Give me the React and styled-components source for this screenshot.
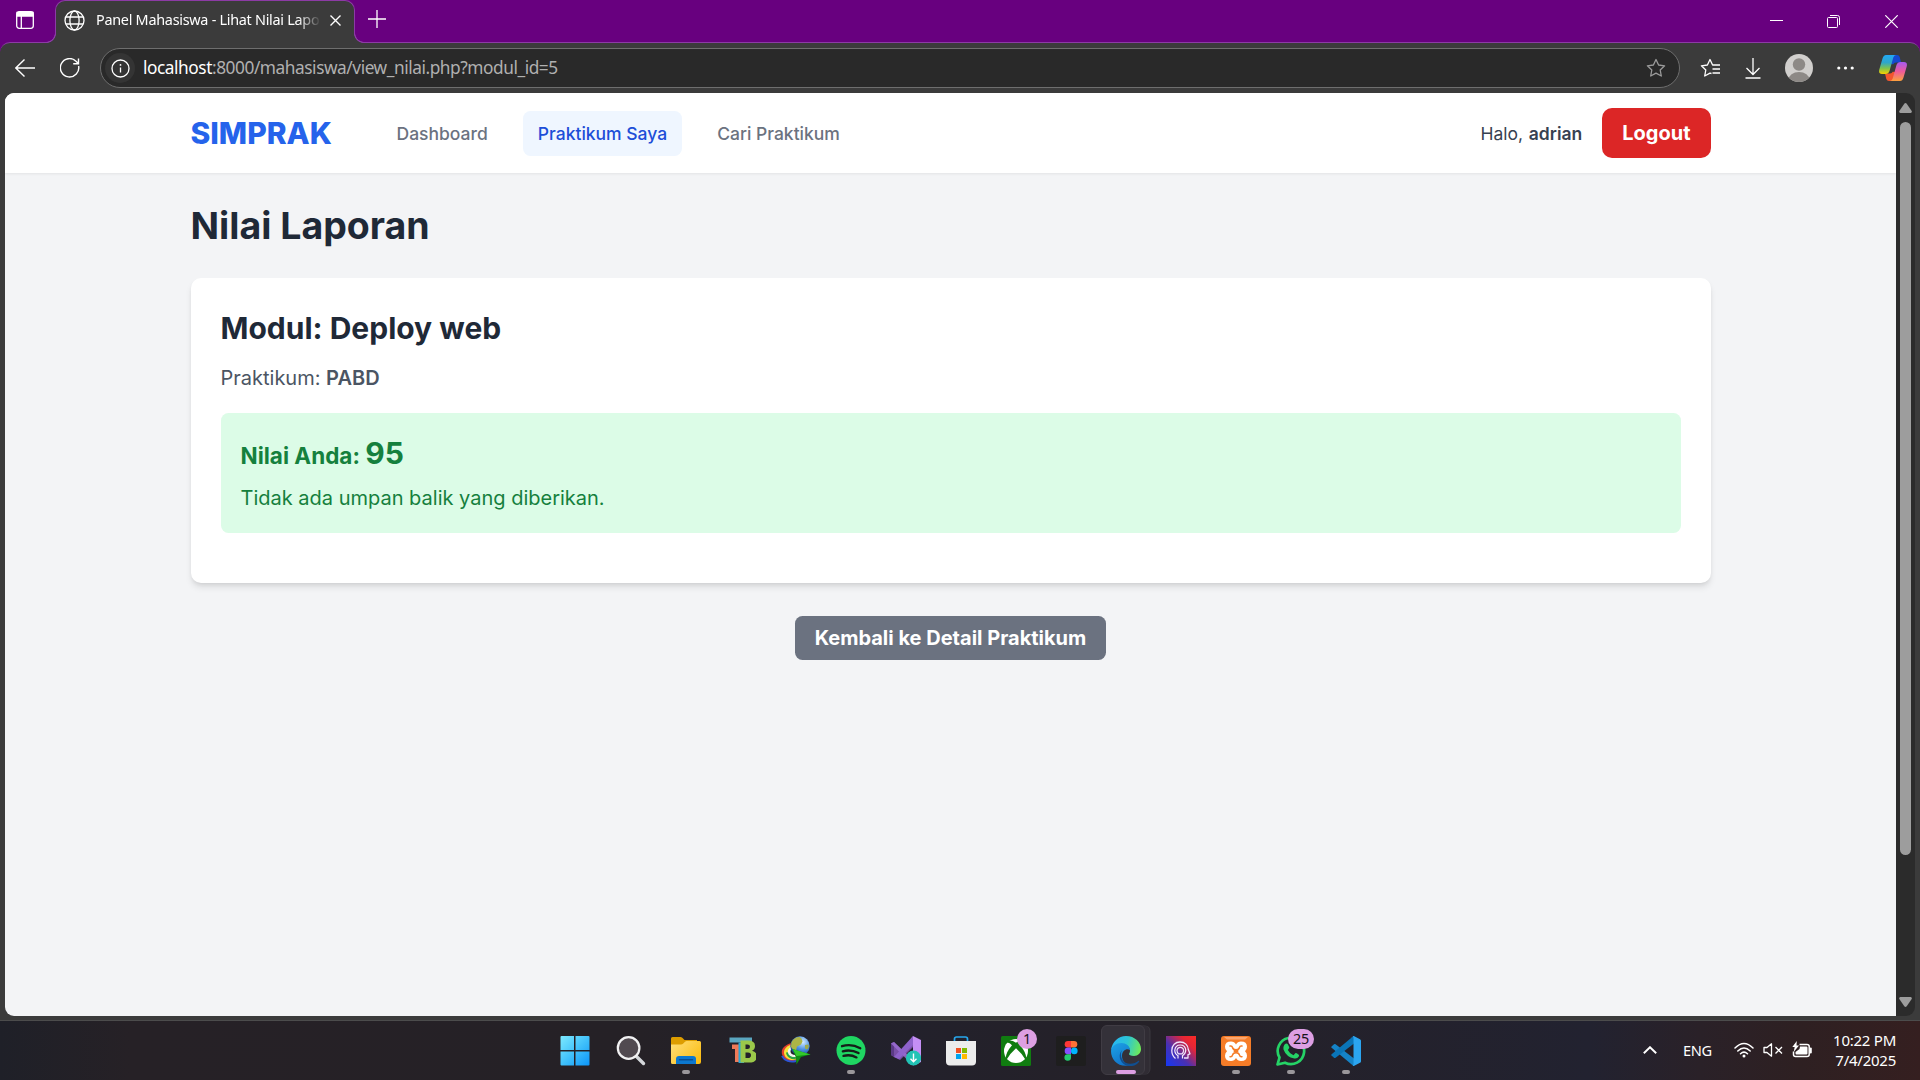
import React from "react";
import styled, { createGlobalStyle } from "styled-components";

const UI = '"Noto Sans", "Open Sans", sans-serif';
const FRAME = "#3b3b3b";
const LINE = "#8c3ba5";

const GlobalStyle = createGlobalStyle`
  * { box-sizing: border-box; }
  body { margin: 0; background: #212026; overflow: hidden; }
  svg { display: block; flex: none; }
  h1, h2, p { margin: 0; }
`;

const Screen = styled.div`
  width: 1920px;
  height: 1080px;
  display: flex;
  flex-direction: column;
  overflow: hidden;
  font-family: ${UI};
`;

/* ---------- Browser chrome ---------- */
const Browser = styled.div`
  height: 1021px;
  display: flex;
  flex-direction: column;
  background: #68007f;
`;
const TitleBar = styled.div`
  height: 42px;
  display: flex;
  flex: none;
  padding-left: 16px;
  color: #fff;
`;
const WorkspaceButton = styled.div`
  width: 39px;
  padding-top: 11px;
`;
const Tab = styled.div`
  position: relative;
  width: 300px;
  height: 43px;
  flex: none;
  display: flex;
  align-items: center;
  padding: 0 13px 3px 8px;
  background: ${FRAME};
  border: 1px solid ${LINE};
  border-bottom: 0;
  border-radius: 10px 10px 0 0;
  z-index: 1;
  &::before,
  &::after {
    content: "";
    position: absolute;
    bottom: 0;
    width: 10px;
    height: 10px;
  }
  &::before {
    left: -10px;
    background: radial-gradient(circle at 0 0, transparent 8.5px, ${LINE} 9px, ${LINE} 9.7px, ${FRAME} 10.3px);
  }
  &::after {
    right: -10px;
    background: radial-gradient(circle at 100% 0, transparent 8.5px, ${LINE} 9px, ${LINE} 9.7px, ${FRAME} 10.3px);
  }
`;
const TabTitle = styled.div`
  width: 226px;
  margin-left: 11px;
  margin-right: 8px;
  white-space: nowrap;
  font-size: 14.4px;
  letter-spacing: -0.27px;
  line-height: 22px;
  padding-bottom: 1px;
  mask-image: linear-gradient(90deg, #000 202px, transparent 225px);
`;
const NewTab = styled.div`
  padding: 10px 0 0 13px;
  flex: 1;
`;
const WindowControls = styled.div`
  display: flex;
  height: 43px;
`;
const WindowButton = styled.div`
  width: 57.6px;
  display: flex;
  align-items: center;
  justify-content: center;
`;
const Toolbar = styled.div`
  height: 51px;
  flex: none;
  display: flex;
  align-items: center;
  padding-left: 15px;
  background: ${FRAME};
  border-top: 1px solid ${LINE};
  border-radius: 10px 10px 0 0;
`;
const Back = styled.div`
  width: 45px;
`;
const Refresh = styled.div`
  width: 40px;
`;
const AddressBar = styled.div`
  width: 1580px;
  height: 40px;
  display: flex;
  align-items: center;
  padding: 0 13px 0 4px;
  background: #292929;
  border: 1px solid #6e6e6e;
  border-radius: 20px;
`;
const InfoBadge = styled.div`
  width: 30px;
  height: 30px;
  border-radius: 15px;
  background: #343434;
  display: flex;
  align-items: center;
  justify-content: center;
`;
const Url = styled.div`
  flex: 1;
  margin-left: 8px;
  font-size: 17.3px;
  letter-spacing: -0.45px;
  line-height: 24px;
  color: #b0b0b0;
  white-space: nowrap;
`;
const Host = styled.span`
  color: #fff;
`;
const ToolbarActions = styled.div`
  flex: 1;
  display: flex;
  align-items: center;
  justify-content: space-between;
  padding: 0 13px 0 20px;
`;
const Viewport = styled.div`
  flex: 1;
  min-height: 0;
  display: flex;
  padding: 0 5px 4px;
  background: ${FRAME};
  border-bottom: 1px solid #4c4c4c;
`;
const Scrollbar = styled.div`
  width: 19px;
  display: flex;
  flex-direction: column;
  align-items: center;
  padding: 10px 0 9px;
  background: #2b2b2b;
  border-radius: 0 9px 9px 0;
`;
const Thumb = styled.div`
  width: 11px;
  height: 733px;
  margin-top: 9px;
  margin-bottom: auto;
  border-radius: 6px;
  background: #9d9d9d;
`;

/* ---------- Web page ---------- */
const Page = styled.div`
  flex: 1;
  overflow: hidden;
  background: #f3f4f6;
  border-radius: 9px 0 0 9px;
  font-family: Inter, sans-serif;
  font-size: 20px;
  line-height: 30px;
`;
const Header = styled.header`
  height: 80px;
  background: #fff;
  box-shadow: 0 1.25px 2.5px rgba(0, 0, 0, 0.07);
`;
const Container = styled.div`
  width: 1520px;
  margin: 0 auto;
`;
const Nav = styled(Container)`
  height: 80px;
  display: flex;
  align-items: center;
`;
const Brand = styled.div`
  width: 141px;
  font-size: 30px;
  line-height: 40px;
  font-weight: 800;
  color: #2563eb;
  margin-right: 50px;
`;
const Links = styled.nav`
  display: flex;
  gap: 20px;
  flex: 1;
`;
const NavLink = styled.a`
  padding: 10px 15px;
  border-radius: 7.5px;
  font-size: 17.5px;
  line-height: 25px;
  font-weight: 500;
  color: ${(p) => (p.$active ? "#1d4ed8" : "#6b7280")};
  background: ${(p) => (p.$active ? "#eff6ff" : "transparent")};
`;
const Greeting = styled.div`
  font-size: 17.5px;
  line-height: 25px;
  color: #374151;
  margin-right: 20px;
  word-spacing: 0.8px;
  b { font-weight: 600; }
`;
const Logout = styled.a`
  padding: 10px 20px;
  border-radius: 10px;
  background: #dc2626;
  color: #fff;
  font-weight: 700;
`;
const Main = styled(Container)`
  padding-top: 30px;
`;
const PageTitle = styled.h1`
  font-size: 37.5px;
  line-height: 45px;
  font-weight: 700;
  color: #1f2937;
  margin-bottom: 30px;
`;
const Card = styled.section`
  padding: 30px 30px 50px;
  background: #fff;
  border-radius: 10px;
  box-shadow: 0 5px 7.5px -1.25px rgba(0, 0, 0, 0.1), 0 2.5px 5px -2.5px rgba(0, 0, 0, 0.1);
`;
const ModuleTitle = styled.h2`
  font-size: 30px;
  line-height: 40px;
  font-weight: 700;
  color: #1f2937;
  margin-bottom: 15px;
`;
const Course = styled.p`
  color: #4b5563;
  margin-bottom: 20px;
  b { font-weight: 600; }
`;
const Grade = styled.div`
  padding: 20px;
  background: #dcfce7;
  border-radius: 7.5px;
  color: #15803d;
`;
const Score = styled.p`
  font-size: 22.5px;
  line-height: 40px;
  height: 40px;
  font-weight: 700;
  margin-bottom: 10px;
  span { font-size: 30px; }
`;
const Actions = styled.div`
  display: flex;
  justify-content: center;
  margin-top: 33px;
`;
const BackLink = styled.a`
  padding: 7px 20px;
  border-radius: 7.5px;
  background: #6b7280;
  color: #fff;
  font-weight: 700;
`;

/* ---------- Taskbar ---------- */
const Taskbar = styled.div`
  height: 59px;
  display: flex;
  padding-left: 548.5px;
  background: linear-gradient(90deg, #1f2028 0, #262126 130px, #252126 640px, #22212c 850px, #252128 1150px, #222230 1590px, #2a2128 1700px, #2e2022 1800px, #351f20 1920px);
`;
const Apps = styled.div`
  display: flex;
  width: 825px;
`;
const AppButton = styled.div`
  position: relative;
  width: 55px;
  display: flex;
  flex-direction: column;
  align-items: center;
  padding: 15px ${(p) => p.$inset || 0}px 0 0;
`;
const ActiveTile = styled.div`
  position: absolute;
  left: 2.5px;
  top: 4px;
  width: 44px;
  height: 50px;
  border-radius: 6px;
  background: #343139;
  border: 1px solid #403c44;
  box-shadow: 5px 0 0 -0.5px #302c34, 6px 0 0 -0.5px #3b383f;
`;
const AppIcon = styled.svg.attrs({ width: 30, height: 30, viewBox: "0 0 30 30", fill: "none" })`
  position: relative;
`;
const Indicator = styled.div`
  position: relative;
  width: ${(p) => (p.$active ? 20 : 8)}px;
  height: 4px;
  margin-top: 4px;
  border-radius: 2px;
  background: ${(p) => (p.$active ? "#dd9fe3" : "#9a979b")};
`;
const Badge = styled.div`
  position: absolute;
  top: 8px;
  left: ${(p) => p.$left}px;
  min-width: 20px;
  height: 20px;
  padding: 0 5px;
  border-radius: 10px;
  background: #dd9fe3;
  color: #17131a;
  font-size: 14.4px;
  line-height: 20px;
  letter-spacing: -0.3px;
  text-align: center;
`;
const Tray = styled.div`
  flex: 1;
  display: flex;
  align-items: center;
  justify-content: flex-end;
  padding: 0 24px 2px 0;
  color: #fff;
`;
const Language = styled.div`
  width: 29px;
  margin: 0 22px 0 26px;
  font-size: 14.6px;
  letter-spacing: -0.4px;
  line-height: 20px;
  padding-top: 1px;
  white-space: nowrap;
`;
const StatusIcons = styled.div`
  display: flex;
  align-items: center;
  gap: 9px;
  margin-right: 20px;
`;
const Clock = styled.div`
  width: 63px;
  font-size: 15px;
  line-height: 20px;
  letter-spacing: -0.25px;
  display: flex;
  flex-direction: column;
  align-items: flex-end;
  white-space: nowrap;
`;

const star = "M10 1.5 12.6 7l6 .8-4.4 4.2 1.1 6L10 15.100l-5.300 2.900 1.100-6L1.400 7.800l6-.8z";

const apps = [
  { id: "start", inset: 2, art: (
    <>
      <defs><linearGradient id="win" x1="0" y1="0" x2="30" y2="30" gradientUnits="userSpaceOnUse"><stop stopColor="#7eeaff" /><stop offset=".5" stopColor="#42c2fb" /><stop offset="1" stopColor="#0a93f8" /></linearGradient></defs>
      <path fill="url(#win)" d="M1.500 0H14v14H.5V1q0-1 1-1zM15.500 0H28.500q1 0 1 1v13h-14zM.5 15.500H14v14H1.500q-1 0-1-1zM15.500 15.500h14v13q0 1-1 1h-13z" />
    </>
  ) },
  { id: "search", art: (
    <>
      <path d="m20.500 20.500 7 7" stroke="#d4d7da" strokeWidth="3.400" strokeLinecap="round" />
      <circle cx="12.600" cy="12" r="10.800" fill="#514a50" stroke="#f1f1f2" strokeWidth="2.200" />
    </>
  ) },
  { id: "explorer", running: true, art: (
    <>
      <defs><linearGradient id="fold" x1="0" y1="4" x2="26" y2="28" gradientUnits="userSpaceOnUse"><stop stopColor="#ffe07d" /><stop offset="1" stopColor="#fbbd12" /></linearGradient></defs>
      <path d="M0 2.500Q0 1 1.500 1h8q1 0 1.800.8L13.500 4H26v6H0z" fill="#dd9d00" />
      <path d="M0 8.500h10q1.200 0 2-.8l2-2q.8-.7 1.800-.7H28.500Q30 5 30 6.500v19.500q0 2-2 2H1.500Q0 28 0 26.500z" fill="url(#fold)" />
      <path d="M5 28v-5q0-3 3-3h14q3 0 3 3v5z" fill="#0c78cf" />
      <path d="M8.500 23.800h13" stroke="#0a4f93" strokeWidth="1.500" strokeLinecap="round" />
    </>
  ) },
  { id: "tb", art: (
    <>
      <path d="M3.500 1.500H26v5H3.500z" fill="#5aa6c0" />
      <path d="M6 8.500h7.500V26H9V13H6z" fill="#ee7a58" />
      <path d="M12.500 6.500h5.500v20.500h-5.500z" fill="#2ba6d2" />
      <path fillRule="evenodd" d="M14.500 4.500h7.500q7 0 7 5.500 0 3.500-3 4.800 4.800 1.200 4.800 5.500 0 6.200-7.800 6.200h-8.500zm5 4v4.500h2q2.500 0 2.500-2.300 0-2.200-2.500-2.200zm0 8v5.500h2.500q3 0 3-2.800 0-2.700-3-2.700z" fill="#9bc84a" />
    </>
  ) },
  { id: "idm", art: (
    <>
      <defs><radialGradient id="glb" cx=".65" cy=".3" r=".75"><stop stopColor="#d5ecff" /><stop offset=".5" stopColor="#4d92e4" /><stop offset="1" stopColor="#143f8d" /></radialGradient></defs>
      <path d="M14 6.500C5 7.500-1.500 12.500 1.500 19.500 4 25 10 26.500 16 24.500l-1-5C11 20 9 18.500 8.500 16c-.5-2.500 2-4 5-4.500z" fill="#e5402d" />
      <path d="M13.500 7.800C6 9 1.500 13.500 3.500 19c1.500 4 6 5.500 11 4.800l-.5-4C10.500 20 8.700 18 8.500 16c-.3-2.500 2-4 4.500-4.500z" fill="#f6e33a" />
      <path d="M5 16.500c.5 4 4 7 9.500 7l.5-2.500c-4 .5-6.500-2-6.500-5z" fill="#27a346" />
      <path d="M13 10C9 10.500 6 13.500 7 17c.8 3 4 4.500 8 4l-.5-2c-3 0-5-1.500-5-3.500 0-2.500 1.500-3.500 4-4z" fill="#f1f3ee" />
      <path d="M1 20c2.500 4.500 8 6.500 14 5" stroke="#2a55d8" strokeWidth="2" />
      <circle cx="19" cy="10" r="9.700" fill="url(#glb)" />
      <path d="M10.500 6q3-5 8-5l2 1.500 1 3-1.500 3-4 2-1 4q-4-1-5-4z" fill="#aeb546" />
      <path d="m24 9 3.500-.5q1 3-1.500 5l-2-1z" fill="#9eab4b" />
      <path d="m11.500 13 18 5.500-9.500 2.500-4.500 7.500-.5-7z" fill="#0f8f13" />
      <path d="m11.500 13 18 5.500-14 1.500z" fill="#33c82c" />
    </>
  ) },
  { id: "spotify", running: true, art: (
    <>
      <circle cx="15" cy="14.500" r="14.500" fill="#1fd662" />
      <path d="M6 10.200q9.500-2.800 18.300 2M6.800 15.300q8.200-2.200 15.700 1.800M7.500 19.900q7-1.800 13 1.500" stroke="#151d19" strokeWidth="2.300" strokeLinecap="round" />
    </>
  ) },
  { id: "vs", art: (
    <>
      <path d="m0 7.500 3-1.500 8.500 8.500L22 0v11L9 24l-6-3-3-2z" fill="#7950a8" />
      <path d="M0 7.500 3 6v15l-3-2z" fill="#5b3a86" />
      <path d="m3 6 19 18v5.500L0 7.500z" fill="#9b6dd4" opacity=".85" />
      <path d="M22 0 30 4v22l-8 3.500z" fill="#c58ff5" />
      <path d="m3 21 19-21v9L8 23z" fill="#8e62cb" />
      <circle cx="22.500" cy="22" r="7.600" fill="#22c3b5" />
      <path d="M22.500 17.500v8m-3-2.700 3 3 3-3" stroke="#fff" strokeWidth="1.400" />
    </>
  ) },
  { id: "store", art: (
    <>
      <path d="M8.500 5V3Q8.500 1 10.500 1h9q2 0 2 2v2" stroke="#27a8ee" strokeWidth="1.700" />
      <path d="M0 5h30v20.500Q30 29.500 26 29.500H4Q0 29.500 0 25.500z" fill="#ececec" />
      <path d="M10 12h5v5h-5z" fill="#f25022" /><path d="M16 12h5v5h-5z" fill="#7fba00" />
      <path d="M10 18h5v5h-5z" fill="#00a4ef" /><path d="M16 18h5v5h-5z" fill="#ffb900" />
    </>
  ) },
  { id: "xbox", badge: "1", badgeLeft: 28.5, art: (
    <>
      <rect width="30" height="30" rx="1.500" fill="#107c10" />
      <circle cx="15" cy="15" r="12" fill="#fff" />
      <path d="M6 5Q10.500 3.500 15 6.700 19.500 3.500 24 5L26 7Q22 5.500 19 9.300 26.500 18 25 24.500 21.500 18 15 12.300 8.500 18 5 24.500 3.500 18 11 9.300 8 5.500 4 7z" fill="#107c10" />
    </>
  ) },
  { id: "figma", art: (
    <>
      <rect width="30" height="30" rx="2" fill="#1e1e1e" />
      <path d="M15 5h-3a3.300 3.300 0 0 0 0 6.600h3z" fill="#ff3737" />
      <path d="M15 5h3a3.300 3.300 0 0 1 0 6.600h-3z" fill="#ff7237" />
      <path d="M15 11.600h-3a3.300 3.300 0 0 0 0 6.600h3z" fill="#874fff" />
      <circle cx="18.300" cy="14.900" r="3.300" fill="#00b6ff" />
      <path d="M15 18.200h-3a3.300 3.300 0 1 0 3 3.300z" fill="#24cb71" />
    </>
  ) },
  { id: "edge", running: true, active: true, art: (
    <>
      <defs>
        <linearGradient id="e1" x1="0" y1="6" x2="30" y2="14" gradientUnits="userSpaceOnUse"><stop stopColor="#27b5f5" /><stop offset=".5" stopColor="#2cc5d5" /><stop offset="1" stopColor="#72ec52" /></linearGradient>
        <linearGradient id="e2" x1="2" y1="10" x2="14" y2="30" gradientUnits="userSpaceOnUse"><stop stopColor="#1b9de2" /><stop offset="1" stopColor="#1170c8" /></linearGradient>
      </defs>
      <path d="M0 14.500C1 5.500 7.500 0 15 0c9 0 15 6.500 15 13 0 4-3 7-7 7-3.500 0-5-1.200-5-2 0-.8 1-1.200 1-3.300 0-3-3-6.200-8-6.200-6 0-10 3.500-11 6z" fill="url(#e1)" />
      <path d="M0 15C.5 10 5 7 10.500 7c4.500 0 8.500 3 8.500 7-3-2-8 0-8 6 0 5 4 8.500 8 9.300C8 32 0 24.500 0 15z" fill="url(#e2)" />
      <path d="M11.500 13.700C9 16 9 24 14.500 26.700c5 2.400 10 .3 12.700-1.700.8-.6 1.300 0 .9.700C26 28.500 21.500 31 17 30 9 28.500 6 18.500 11.500 13.700z" fill="#104f91" />
    </>
  ) },
  { id: "head", art: (
    <>
      <defs><linearGradient id="hd" x1="0" y1="30" x2="30" y2="0" gradientUnits="userSpaceOnUse"><stop stopColor="#1438f5" /><stop offset=".4" stopColor="#4b30b0" /><stop offset=".75" stopColor="#e52637" /><stop offset="1" stopColor="#fb2b25" /></linearGradient></defs>
      <path fill="url(#hd)" d="M0 0h30v30H0z" />
      <path d="M9.500 22.500Q5.800 19.500 5.800 14.500C5.800 9 9.500 6 14 6c5 0 8 3.200 8.300 7.500l1.700 4.300-2 .8v3.400h-4" stroke="#efe2fb" strokeWidth="1.300" strokeLinejoin="round" />
      <path d="M12 22.500v-2.800Q8.800 18 8.800 14.300 9.300 9 14.300 9t5.500 5.300Q19.500 18 16.500 19.700V22.500" stroke="#f6effd" strokeWidth="1.200" />
      <path d="M12.500 17.800q-1.500-1.300-1.500-3.300.3-3.200 3.300-3.200t3.300 3.200q0 2-1.500 3.300z" stroke="#efe2fb" strokeWidth="1.200" />
    </>
  ) },
  { id: "xampp", running: true, art: (
    <>
      <rect width="30" height="30" rx="3" fill="#f57c28" />
      <path d="M3 1h24l-3 2.500H6z" fill="#fba770" />
      <path d="M10 5.500q3.500 0 5 3 1.500-3 5-3 6 0 6 5.200 0 3-2 4.500 2 1.500 2 4.500 0 5.300-6 5.300-3.500 0-5-3-1.500 3-5 3-6 0-6-5.300 0-3 2-4.500-2-1.500-2-4.500 0-5.200 6-5.200z" fill="#fff" />
      <path d="M9 10q2-.5 2.500 1.500.5 2.300 3.500 2.300t3.500-2.300Q19 9.500 21 10M9 20.700q2 .3 2.500-1.600.5-2.400 3.500-2.400t3.500 2.400q.5 1.900 2.500 1.600" stroke="#f57c28" strokeWidth="1.500" strokeLinecap="round" />
      <path d="M12.700 15.200h4.600" stroke="#f57c28" strokeWidth="2.500" />
    </>
  ) },
  { id: "whatsapp", running: true, badge: "25", badgeLeft: 24.500, art: (
    <>
      <path d="m1.500 28.500 2-7A13.200 13.200 0 1 1 9 26.700z" stroke="#25d366" strokeWidth="2.700" strokeLinejoin="round" />
      <path d="M9.500 7.800q1.500-.8 2.300.4l1.500 3q.3.800-1.500 2.800 2 4 5.700 5.200l1.800-2q.6-.4 3.200 1.200 1 .6.300 2-1.500 2.500-4.500 2-8-1.500-10.800-9-.6-3.600 2-5.600z" fill="#25d366" />
    </>
  ) },
  { id: "vscode", running: true, art: (
    <>
      <path d="M.5 10.500 3 8.300q.8-.6 1.600 0L23 22.500v7q-1 0-2-.8L.6 11.800q-.6-.6-.1-1.300z" fill="#1583c7" />
      <path d="M.5 19.500 3 21.700q.8.600 1.600 0L23 7.500v-7q-1 0-2 .8L.6 18.200q-.6.600-.1 1.300z" fill="#0a75b8" />
      <path d="M21.500.3q.8-.6 1.800 0l5.700 3q1 .5 1 1.500v20.400q0 1-1 1.500l-5.700 3q-1 .5-1.800-.2 1-.3 1-1.500V2q0-1.200-1-1.700z" fill="#2ba5f0" />
    </>
  ) },
];

function BrowserTop() {
  const s = { fill: "none", stroke: "#fff" };
  return (
    <>
      <TitleBar>
        <WorkspaceButton>
          <svg width="18" height="18" viewBox="0 0 18 18" {...s} strokeWidth="1.300">
            <rect x=".7" y=".7" width="16.600" height="16.600" rx="2.500" />
            <path d="M1 1.500h16V5H1z" fill="#fff" /><path d="M5.300 5v12" />
          </svg>
        </WorkspaceButton>
        <Tab>
          <svg width="21" height="21" viewBox="0 0 21 21" {...s} strokeWidth="1.300">
            <circle cx="10.500" cy="10.500" r="9.500" /><ellipse cx="10.500" cy="10.500" rx="4.600" ry="9.500" />
            <path d="M2 7h17M2 14h17" />
          </svg>
          <TabTitle>Panel Mahasiswa - Lihat Nilai Lapo</TabTitle>
          <svg width="11" height="11" viewBox="0 0 11 11" {...s} strokeWidth="1.400"><path d="m.5.5 10 10m0-10-10 10" /></svg>
        </Tab>
        <NewTab>
          <svg width="18" height="18" viewBox="0 0 18 18" {...s} strokeWidth="1.300"><path d="M9 0v18M0 9h18" /></svg>
        </NewTab>
        <WindowControls>
          <WindowButton><svg width="13" height="13" viewBox="0 0 13 13" {...s}><path d="M0 5.500h13" /></svg></WindowButton>
          <WindowButton>
            <svg width="13" height="13" viewBox="0 0 13 13" {...s}>
              <rect x=".5" y="2.500" width="10" height="10" rx="1" /><path d="M3 .5h7.500q2 0 2 2V10" />
            </svg>
          </WindowButton>
          <WindowButton><svg width="13" height="13" viewBox="0 0 13 13" {...s} strokeWidth="1.200"><path d="m.3.3 12.400 12.400m0-12.400L.3 12.700" /></svg></WindowButton>
        </WindowControls>
      </TitleBar>
      <Toolbar>
        <Back>
          <svg width="20" height="18" viewBox="0 0 20 18" {...s} strokeWidth="1.400"><path d="M20 9H.8M9.500.5.8 9l8.700 8.500" /></svg>
        </Back>
        <Refresh>
          <svg width="20" height="20" viewBox="0 0 20 20" {...s} strokeWidth="1.400"><path d="M18.600 8A9.200 9.200 0 1 1 16 3.200L18.300 5.500M18.500.5v5.200h-5.300" /></svg>
        </Refresh>
        <AddressBar>
          <InfoBadge>
            <svg width="19" height="19" viewBox="0 0 19 19" {...s} strokeWidth="1.300">
              <circle cx="9.500" cy="9.500" r="8.500" /><path d="M9.500 8.500v5" /><circle cx="9.500" cy="5.900" r=".9" fill="#fff" stroke="none" />
            </svg>
          </InfoBadge>
          <Url><Host>localhost</Host>:8000/mahasiswa/view_nilai.php?modul_id=5</Url>
          <svg width="20" height="20" viewBox="0 0 20 20" fill="none" stroke="#9b9b9b" strokeWidth="1.300" strokeLinejoin="round"><path d={star} /></svg>
        </AddressBar>
        <ToolbarActions>
          <svg width="21" height="20" viewBox="0 0 21 20" {...s} strokeWidth="1.300" strokeLinejoin="round">
            <path d="M11.500 15.500 10 15.100l-5.300 2.900 1.100-6L1.400 7.800l6-.8L10 1.500 12.600 7H20M12.500 11H20M12.500 15H20" />
          </svg>
          <svg width="16" height="21" viewBox="0 0 16 21" {...s} strokeWidth="1.300"><path d="M8 0v16M1.500 10 8 16.500l6.500-6.500M.5 20h15" /></svg>
          <svg width="28" height="28" viewBox="0 0 28 28">
            <defs><clipPath id="av"><circle cx="14" cy="14" r="14" /></clipPath></defs>
            <circle cx="14" cy="14" r="14" fill="#d1cfcd" />
            <g fill="#8d8986" clipPath="url(#av)"><circle cx="14" cy="10.500" r="6.200" /><ellipse cx="14" cy="26" rx="10.500" ry="8" /></g>
          </svg>
          <svg width="18" height="4" viewBox="0 0 18 4" fill="#fff"><circle cx="1.800" cy="2" r="1.600" /><circle cx="8.500" cy="2" r="1.600" /><circle cx="15.200" cy="2" r="1.600" /></svg>
          <svg width="28" height="26" viewBox="0 0 28 26">
            <defs>
              <linearGradient id="c1" x1="0" y1="0" x2="0" y2="1"><stop stopColor="#22a8f5" /><stop offset=".4" stopColor="#2fa6c9" /><stop offset=".7" stopColor="#7fc34c" /><stop offset="1" stopColor="#f7d000" /></linearGradient>
              <linearGradient id="c2" x1="0" y1="0" x2="0" y2="1"><stop stopColor="#a45af0" /><stop offset=".5" stopColor="#ee5a9a" /><stop offset="1" stopColor="#fca13d" /></linearGradient>
            </defs>
            <path d="M14 0h4q2 0 2.700 2L22 7.500h-5q-2 0-2.700 1.700L11 9z" fill="#1549cf" />
            <path d="M14 26h-4q-2 0-2.700-2L6 18.500h5q2 0 2.700-1.700L17 17z" fill="#f2562e" />
            <path d="M7 0h10q-2 .3-2.700 2.500L10.500 16Q9.500 19 6.500 19H3Q-.8 19 .3 14.500L3.500 3.500Q4.500 0 7 0z" fill="url(#c1)" />
            <path d="M21 26H11q2-.3 2.700-2.500L17.500 10q1-3 4-3H25q3.800 0 2.700 4.500l-3.200 11Q23.500 26 21 26z" fill="url(#c2)" />
          </svg>
        </ToolbarActions>
      </Toolbar>
    </>
  );
}

export default function App() {
  return (
    <Screen>
      <GlobalStyle />
      <Browser>
        <BrowserTop />
        <Viewport>
          <Page>
            <Header>
              <Nav>
                <Brand>SIMPRAK</Brand>
                <Links>
                  <NavLink>Dashboard</NavLink>
                  <NavLink $active>Praktikum Saya</NavLink>
                  <NavLink>Cari Praktikum</NavLink>
                </Links>
                <Greeting>Halo, <b>adrian</b></Greeting>
                <Logout>Logout</Logout>
              </Nav>
            </Header>
            <Main>
              <PageTitle>Nilai Laporan</PageTitle>
              <Card>
                <ModuleTitle>Modul: Deploy web</ModuleTitle>
                <Course>Praktikum: <b>PABD</b></Course>
                <Grade>
                  <Score>Nilai Anda: <span>95</span></Score>
                  <p>Tidak ada umpan balik yang diberikan.</p>
                </Grade>
              </Card>
              <Actions><BackLink>Kembali ke Detail Praktikum</BackLink></Actions>
            </Main>
          </Page>
          <Scrollbar>
            <svg width="13" height="10" viewBox="0 0 13 10"><path d="M5.300.8q1.200-1.400 2.400 0l5 7.200q.6 1.500-1 2H1.300q-1.600-.5-1-2z" fill="#9d9d9d" /></svg>
            <Thumb />
            <svg width="13" height="10" viewBox="0 0 13 10"><path d="M5.300 9.200q1.200 1.400 2.400 0l5-7.200q.6-1.500-1-2H1.300q-1.600.5-1 2z" fill="#9d9d9d" /></svg>
          </Scrollbar>
        </Viewport>
      </Browser>
      <Taskbar>
        <Apps>
          {apps.map((a) => (
            <AppButton key={a.id} $inset={a.inset}>
              {a.active && <ActiveTile />}
              <AppIcon>{a.art}</AppIcon>
              {a.running && <Indicator $active={a.active} />}
              {a.badge && <Badge $left={a.badgeLeft}>{a.badge}</Badge>}
            </AppButton>
          ))}
        </Apps>
        <Tray>
          <svg width="14" height="8" viewBox="0 0 14 8" fill="none" stroke="#fff" strokeWidth="1.900"><path d="M.8 7.200 7 1.200l6.200 6" /></svg>
          <Language>ENG</Language>
          <StatusIcons>
            <svg width="20" height="16" viewBox="0 0 20 16" fill="none" stroke="#fff" strokeWidth="1.500" strokeLinecap="round">
              <path d="M1 6q9-9 18 0M3.800 9q6.200-6 12.400 0M6.500 11.800q3.500-3.300 7 0" /><circle cx="10" cy="14" r="1.500" fill="#fff" stroke="none" />
            </svg>
            <svg width="20" height="14" viewBox="0 0 20 14" fill="none" stroke="#fff" strokeWidth="1.300" strokeLinejoin="round">
              <path d="M1 4.500h3L8.500.8v12.400L4 9.500H1zM12.500 4l6.500 6.500M19 4l-6.500 6.500" />
            </svg>
            <svg width="21" height="18" viewBox="0 0 21 18" fill="none" stroke="#fff" strokeWidth="1.500">
              <path d="M7.500 3.500H15q2.200 0 2.200 2v8q0 2-2.200 2H3.500q-2 0-2-2v-3" /><path d="M8 5.500h6.500q1 0 1 1v6q0 1-1 1h-10q-1 0-1-1v-1.500l4-3z" fill="#fff" stroke="none" />
              <path d="M18.700 7.500v4" strokeWidth="2.200" strokeLinecap="round" /><path d="M4.800 0 .3 6h2.400L1.700 11 7 4.500H4.500z" fill="#fff" stroke="none" />
            </svg>
          </StatusIcons>
          <Clock><span>10:22 PM</span><span>7/4/2025</span></Clock>
        </Tray>
      </Taskbar>
    </Screen>
  );
}
